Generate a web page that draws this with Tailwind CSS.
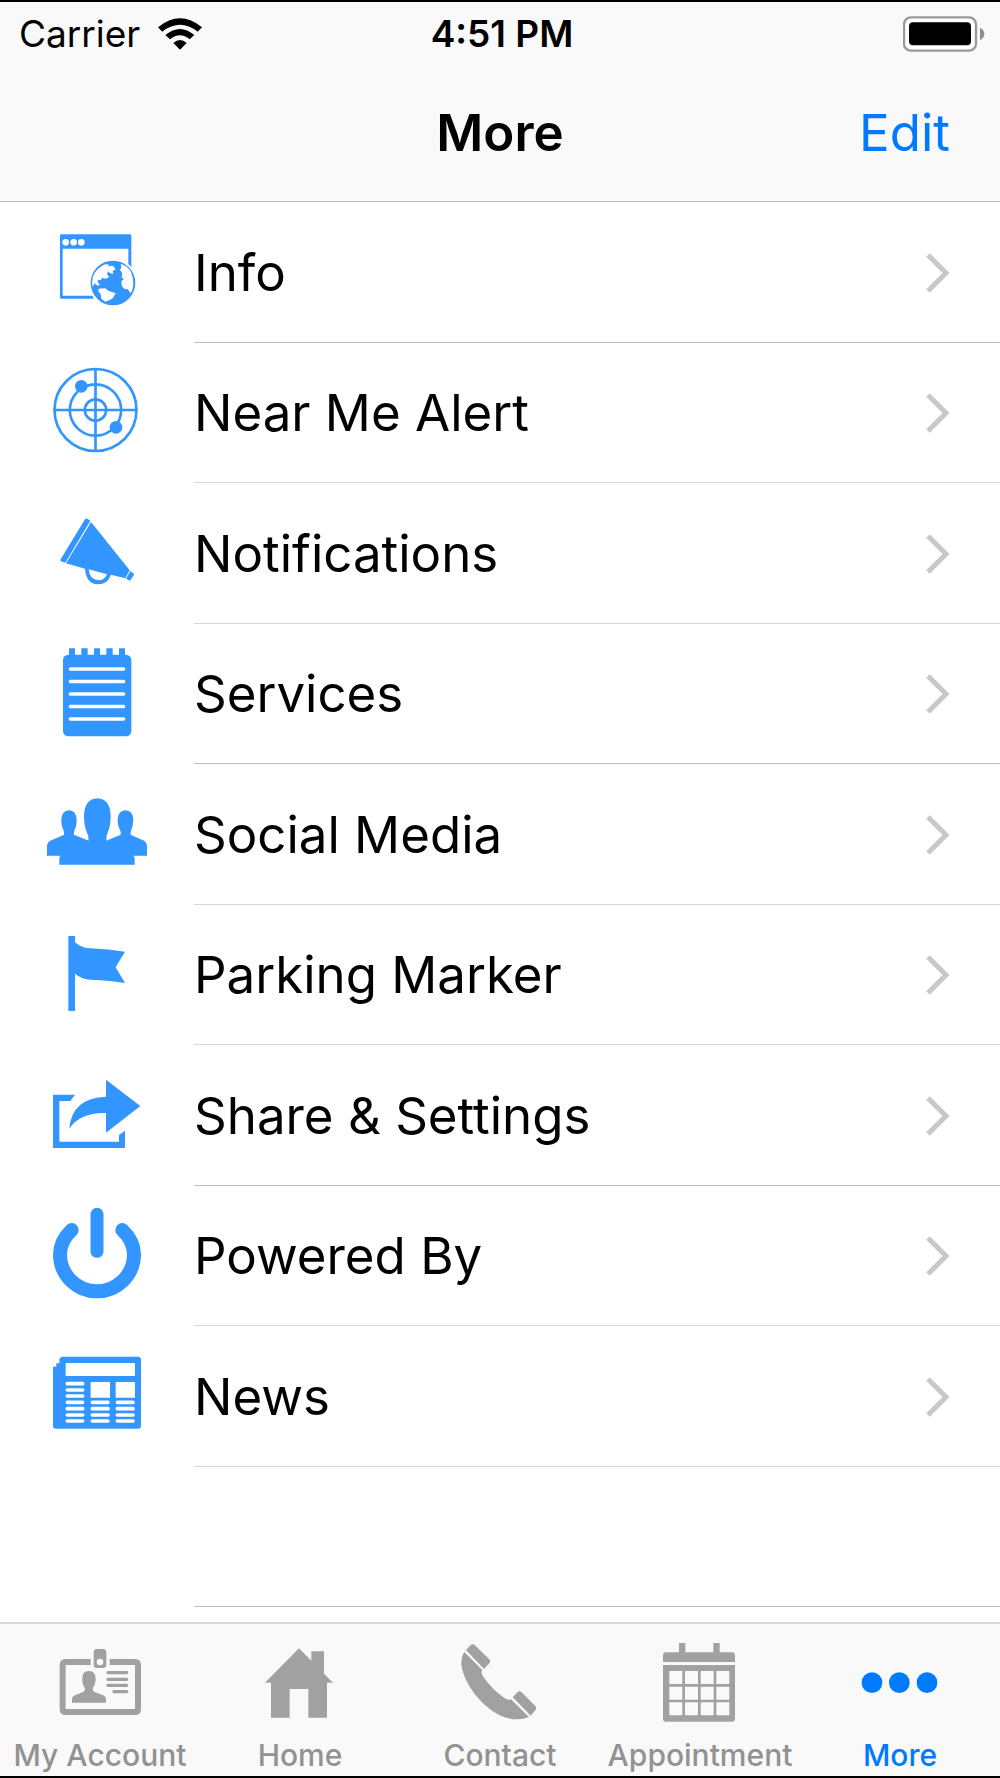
<!DOCTYPE html>
<html lang="en">
<head>
<meta charset="utf-8">
<meta name="viewport" content="width=device-width, initial-scale=1">
<title>More</title>
<script src="https://cdn.jsdelivr.net/npm/@tailwindcss/browser@4"></script>
</head>
<body class="flex min-h-screen flex-col border-y-2 border-black bg-white font-['Inter',sans-serif] text-black">

<header class="border-b border-[#bdbdbf] bg-[#f9f9f9]">
  <div class="grid grid-cols-3 items-center pt-[10px] pr-[15px] pl-[19px]">
    <div class="flex items-center gap-[18px]">
      <span class="text-[37px] leading-[44px]">Carrier</span>
      <svg class="h-[32px] w-[44px]" viewBox="469 50 132 96" aria-label="Wi-Fi">
        <path d="M469 78Q535 24 601 78L588 91Q535 50 482 91Z"/>
        <path d="M491 101Q535 65 578 101L564 114Q535 90 505 114Z"/>
        <path d="M515 125Q535 107 555 125L535 145Z"/>
      </svg>
    </div>
    <span class="text-center text-[37px] leading-[44px] font-semibold whitespace-nowrap">4:51 PM</span>
    <svg class="h-[36px] w-[82px] justify-self-end" viewBox="1209 44 246 108" aria-label="Battery full">
      <rect x="1212" y="48" width="216" height="100" rx="21" fill="#fff" stroke="#999" stroke-width="7"/>
      <rect x="1227" y="63" width="186" height="69" rx="12"/>
      <path d="M1440 79Q1453 86 1453 98Q1453 110 1440 117Z" fill="#8e8e8e"/>
    </svg>
  </div>
  <div class="grid grid-cols-3 items-center pt-[45px] pr-[50px] pb-9 pl-[50px]">
    <h1 class="col-start-2 text-center text-[51px] leading-[64px] font-semibold">More</h1>
    <button type="button" class="justify-self-end text-[51px] leading-[64px] text-[#007aff]">Edit</button>
  </div>
</header>

<main class="flex flex-1 flex-col pb-[15px]">
  <ul class="grid flex-1 auto-rows-fr text-[51px] leading-[64px]">
    <li class="flex">
      <a href="#info" class="flex flex-1 items-center pl-[42px]">
        <svg class="mr-[42px] size-[110px] shrink-0 fill-[#3395ff]" viewBox="36 20 330 330" aria-hidden="true">
          <path fill-rule="evenodd" d="M94 72H300Q304 72 304 76V172H295V115H98V256H190V265H94Q90 265 90 261V76Q90 72 94 72ZM97 96a10 10 0 1 0 20 0a10 10 0 1 0-20 0M121 96a10 10 0 1 0 20 0a10 10 0 1 0-20 0M144 96a10 10 0 1 0 20 0a10 10 0 1 0-20 0"/>
          <circle cx="249" cy="218" r="73" fill="#fff"/>
          <circle cx="249" cy="218" r="67"/>
          <path fill="#fff" d="M189 199Q199 173 225 162L238 163L233 170L241 166L251 168L257 178L248 181L250 190L241 189L234 183L231 193L238 199L228 205L216 203L212 210L204 208L203 216L210 223L203 226L194 219L188 230Q184 214 189 199ZM272 160Q294 168 303 184L309 205L310 222Q309 238 303 248L297 243L294 236L286 237L278 231L274 221L275 211L282 206L274 201L277 193L275 185L270 180L274 171ZM206 235L226 234L235 241L257 249L252 258L248 264L239 269L226 274L214 265L212 252L205 243Z"/>
        </svg>
        <span class="flex flex-1 items-center justify-between self-stretch border-b border-[#c0c0c4] pt-[2px] pr-[50px]">Info
          <svg class="h-[42px] w-[24px]" viewBox="0 0 24 42" fill="none" stroke="#c7c7cc" stroke-width="5" aria-hidden="true"><path d="M2 3L20 21L2 39"/></svg>
        </span>
      </a>
    </li>
    <li class="flex">
      <a href="#near-me" class="flex flex-1 items-center pl-[42px]">
        <svg class="mr-[42px] size-[110px] shrink-0 fill-[#3395ff]" viewBox="36 442 330 330" aria-hidden="true">
          <g fill="none" stroke="#3395ff" stroke-width="8">
            <circle cx="196.500" cy="598" r="123"/><circle cx="196.500" cy="598" r="77"/><circle cx="196.500" cy="598" r="32"/>
            <path d="M196.500 475V721M73 598H320"/>
          </g>
          <circle cx="154" cy="527" r="19"/><circle cx="258" cy="650" r="19"/>
        </svg>
        <span class="flex flex-1 items-center justify-between self-stretch border-b border-[#d6d6da] pt-[2px] pr-[50px]">Near Me Alert
          <svg class="h-[42px] w-[24px]" viewBox="0 0 24 42" fill="none" stroke="#c7c7cc" stroke-width="5" aria-hidden="true"><path d="M2 3L20 21L2 39"/></svg>
        </span>
      </a>
    </li>
    <li class="flex">
      <a href="#notifications" class="flex flex-1 items-center pl-[42px]">
        <svg class="mr-[42px] size-[110px] shrink-0 fill-[#3395ff]" viewBox="36 24 330 330" aria-hidden="true">
          <path d="M165 88Q168 84 172 86L181 92L106 218L93 214Q89 212 92 208ZM183 96L299 241L286 265L243 254Q233 283 204 283Q168 281 165 236L108 220ZM176 238Q179 270 205 271Q223 271 231 253ZM301 243L313 253L300 272L288 266Z"/>
        </svg>
        <span class="flex flex-1 items-center justify-between self-stretch border-b border-[#d3d3d8] pt-[2px] pr-[50px]">Notifications
          <svg class="h-[42px] w-[24px]" viewBox="0 0 24 42" fill="none" stroke="#c7c7cc" stroke-width="5" aria-hidden="true"><path d="M2 3L20 21L2 39"/></svg>
        </span>
      </a>
    </li>
    <li class="flex">
      <a href="#services" class="flex flex-1 items-center pl-[42px]">
        <svg class="mr-[42px] size-[110px] shrink-0 fill-[#3395ff]" viewBox="36 446 330 330" aria-hidden="true">
          <rect x="99" y="493" width="205" height="245" rx="16"/>
          <path d="M117 474h18v24h-18zM154 474h19v24h-19zM192 474h18v24h-18zM229 474h19v24h-19zM267 474h18v24h-18z"/>
          <path d="M121 536H281M121 573.500H281M121 611H281M121 648.500H281M121 686H281" stroke="#fff" stroke-width="10" stroke-linecap="round"/>
        </svg>
        <span class="flex flex-1 items-center justify-between self-stretch border-b border-[#c0c0c4] pt-[2px] pr-[50px]">Services
          <svg class="h-[42px] w-[24px]" viewBox="0 0 24 42" fill="none" stroke="#c7c7cc" stroke-width="5" aria-hidden="true"><path d="M2 3L20 21L2 39"/></svg>
        </span>
      </a>
    </li>
    <li class="flex">
      <a href="#social" class="flex flex-1 items-center pl-[42px]">
        <svg class="mr-[42px] size-[110px] shrink-0 fill-[#3395ff]" viewBox="36 28 330 330" aria-hidden="true">
          <path d="M88 285V265L91 258H51V230Q51 219 61 213L102 195Q104 188 100 180Q94 170 94 151Q95 123 117 122Q139 123 140 151Q140 170 134 180Q130 188 132 195L176 213Q177 200 170 186Q162 170 162 137Q164 88 202 86Q240 88 242 137Q242 170 234 186Q227 200 229 213L272 195Q274 188 270 180Q263 170 263 151Q264 123 286 122Q309 123 310 151Q309 170 304 180Q300 188 302 195L342 213Q351 219 351 230V258H310L314 265V285Z"/>
        </svg>
        <span class="flex flex-1 items-center justify-between self-stretch border-b border-[#d6d6da] pt-[2px] pr-[50px]">Social Media
          <svg class="h-[42px] w-[24px]" viewBox="0 0 24 42" fill="none" stroke="#c7c7cc" stroke-width="5" aria-hidden="true"><path d="M2 3L20 21L2 39"/></svg>
        </span>
      </a>
    </li>
    <li class="flex">
      <a href="#parking" class="flex flex-1 items-center pl-[42px]">
        <svg class="mr-[42px] size-[110px] shrink-0 fill-[#3395ff]" viewBox="36 449 330 330" aria-hidden="true">
          <path d="M115 497H135V516Q155 534 182 534Q237 536 285 544L257 591L285 638Q245 630 182 628Q155 627 135 610V722H115Z"/>
        </svg>
        <span class="flex flex-1 items-center justify-between self-stretch border-b border-[#d3d3d8] pt-[2px] pr-[50px]">Parking Marker
          <svg class="h-[42px] w-[24px]" viewBox="0 0 24 42" fill="none" stroke="#c7c7cc" stroke-width="5" aria-hidden="true"><path d="M2 3L20 21L2 39"/></svg>
        </span>
      </a>
    </li>
    <li class="flex">
      <a href="#share" class="flex flex-1 items-center pl-[42px]">
        <svg class="mr-[42px] size-[110px] shrink-0 fill-[#3395ff]" viewBox="36 31 330 330" aria-hidden="true">
          <path d="M69 135H135L121 154H88V276H267V256L285 243V295H69ZM228 90L331 169L228 249V190Q150 188 118 237Q125 145 228 141Z"/>
        </svg>
        <span class="flex flex-1 items-center justify-between self-stretch border-b border-[#c0c0c4] pt-[2px] pr-[50px]">Share &amp; Settings
          <svg class="h-[42px] w-[24px]" viewBox="0 0 24 42" fill="none" stroke="#c7c7cc" stroke-width="5" aria-hidden="true"><path d="M2 3L20 21L2 39"/></svg>
        </span>
      </a>
    </li>
    <li class="flex">
      <a href="#powered-by" class="flex flex-1 items-center pl-[42px]">
        <svg class="mr-[42px] size-[110px] shrink-0" viewBox="36 453 330 330" fill="none" stroke="#3395ff" stroke-linecap="round" aria-hidden="true">
          <path d="M125 540C101 563 90 585 90 613A111 111 0 0 0 312 613C312 585 301 563 277 540" stroke-width="42"/>
          <path d="M201 493V604" stroke-width="39"/>
        </svg>
        <span class="flex flex-1 items-center justify-between self-stretch border-b border-[#d6d6da] pt-[2px] pr-[50px]">Powered By
          <svg class="h-[42px] w-[24px]" viewBox="0 0 24 42" fill="none" stroke="#c7c7cc" stroke-width="5" aria-hidden="true"><path d="M2 3L20 21L2 39"/></svg>
        </span>
      </a>
    </li>
    <li class="flex">
      <a href="#news" class="flex flex-1 items-center pl-[42px]">
        <svg class="mr-[42px] size-[110px] shrink-0 fill-[#3395ff]" viewBox="36 35 330 330" aria-hidden="true">
          <path d="M98 82H324Q333 82 333 91V289Q333 298 324 298H78Q69 298 69 289V112H79V102H88V91Q89 83 98 82Z"/>
          <path fill="#fff" d="M107 101H315V140H107ZM182 158H240V205H182ZM257 158H315V205H257Z"/>
          <path d="M112 163H158M112 182H158M112 200H158M112 219H158M112 238H158M112 257H158M112 275H158M187 219H234M187 238H234M187 257H234M187 275H234M262 219H309M262 238H309M262 257H309M262 275H309" stroke="#fff" stroke-width="11" stroke-linecap="round"/>
        </svg>
        <span class="flex flex-1 items-center justify-between self-stretch border-b border-[#d3d3d8] pt-[2px] pr-[50px]">News
          <svg class="h-[42px] w-[24px]" viewBox="0 0 24 42" fill="none" stroke="#c7c7cc" stroke-width="5" aria-hidden="true"><path d="M2 3L20 21L2 39"/></svg>
        </span>
      </a>
    </li>
    <li class="ml-[194px] border-b border-[#c0c0c4]" aria-hidden="true"></li>
  </ul>
</main>

<nav class="grid grid-cols-5 border-t-2 border-[#dadada] bg-[#f9f9f9] pt-4 pb-[3px] text-[30px] leading-[36px] font-medium text-[#929292]">
  <a href="#account" class="flex flex-col items-center gap-[7px]">
    <svg class="h-[90px] w-[100px] fill-[#a1a1a1]" viewBox="150 120 300 270" aria-hidden="true">
      <path fill-rule="evenodd" d="M197 177H272V195H197V327H405V195H329V177H405Q423 177 423 195V327Q423 345 405 345H197Q179 345 179 327V195Q179 177 197 177ZM290 147H310Q319 147 319 156V195Q319 204 310 204H290Q281 204 281 195V156Q281 147 290 147ZM290 186a10 10 0 1 0 20 0a10 10 0 1 0-20 0"/>
      <path d="M216 308V296Q217 289 225 286L249 276Q257 270 254 263Q246 253 247 235Q247 213 266 213Q286 213 287 235Q287 253 279 263Q276 270 284 276L309 286Q317 289 318 296V308Z"/>
      <path d="M324 218H380M324 238H380M324 256H380M342 275H380" stroke="#a1a1a1" stroke-width="10" stroke-linecap="round"/>
    </svg>
    <span class="whitespace-nowrap">My Account</span>
  </a>
  <a href="#home" class="flex flex-col items-center gap-[7px]">
    <svg class="h-[90px] w-[100px] fill-[#a1a1a1]" viewBox="750 120 300 270" aria-hidden="true">
      <path d="M795 248L897 145L934 182V154H972V221L999 248H981V353H925V267H869V353H813V248Z"/>
    </svg>
    <span>Home</span>
  </a>
  <a href="#contact" class="flex flex-col items-center gap-[7px]">
    <svg class="h-[90px] w-[100px] fill-[#a1a1a1]" viewBox="270 120 300 270" aria-hidden="true">
      <path d="M318 150L332 135Q338 130 344 135L388 178Q393 184 388 190L372 207ZM313 156L367 210Q362 216 368 227Q393 265 434 295Q444 302 453 298L507 351Q470 367 422 347C365 320 318 258 306 205Q300 175 313 156ZM458 292L472 277Q478 271 485 277L526 318Q531 325 526 331L512 347Z"/>
    </svg>
    <span>Contact</span>
  </a>
  <a href="#appointment" class="flex flex-col items-center gap-[7px]">
    <svg class="h-[90px] w-[100px] fill-[#a1a1a1]" viewBox="870 120 300 270" aria-hidden="true">
      <path d="M957 129H976V157H1060V129H1079V157H1116Q1125 157 1125 166V186H909V166Q909 157 918 157H957Z"/>
      <path fill-rule="evenodd" d="M909 195H1125V356Q1125 365 1116 365H918Q909 365 909 356ZM928 213V252H967V213ZM975 213V252H1014V213ZM1022 213V252H1061V213ZM1069 213V252H1108V213ZM928 260V299H967V260ZM975 260V299H1014V260ZM1022 260V299H1061V260ZM1069 260V299H1108V260ZM928 307V346H967V307ZM975 307V346H1014V307ZM1022 307V346H1061V307ZM1069 307V346H1108V307Z"/>
    </svg>
    <span>Appointment</span>
  </a>
  <a href="#more" aria-current="page" class="flex flex-col items-center gap-[7px] text-[#007aff]">
    <svg class="h-[90px] w-[100px] fill-[#007aff]" viewBox="450 180 300 270" aria-hidden="true">
      <circle cx="516" cy="308" r="31"/><circle cx="598" cy="308" r="31"/><circle cx="681" cy="308" r="31"/>
    </svg>
    <span>More</span>
  </a>
</nav>
</body>
</html>
